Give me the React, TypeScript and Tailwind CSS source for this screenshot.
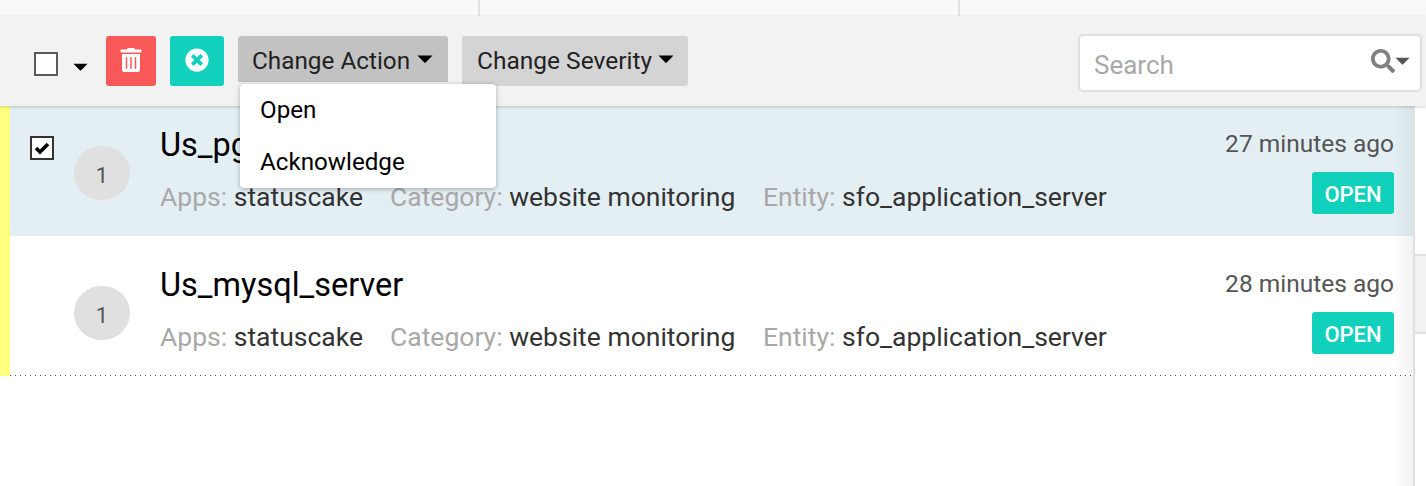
import { FaTrashAlt, FaTimesCircle, FaSearch } from "react-icons/fa";

const Caret = ({ className }: { className: string }) => (
  <svg viewBox="0 0 16 8" className={className} fill="currentColor">
    <path d="M0.5 0.5 H15.5 L8.7 7.5 Q8 8 7.3 7.5 Z" />
  </svg>
);

const rows = [
  { title: "Us_pgsql_server", time: "27 minutes ago", selected: true },
  { title: "Us_mysql_server", time: "28 minutes ago", selected: false },
];

const App = () => {
  return (
    <div className="relative h-[486px] w-[1426px] overflow-hidden bg-white font-['Roboto',sans-serif]">
      {/* top tabs */}
      <div className="flex h-4 bg-[#f9f9f9]">
        <div className="w-[480px] border-r-2 border-[#e2e2e2]" />
        <div className="w-[480px] border-r-2 border-[#e2e2e2]" />
      </div>

      {/* toolbar */}
      <div className="relative z-10 flex h-[90px] items-start bg-[#f2f2f2] pl-[34px] pr-1 pt-5 shadow-[0_1px_3px_rgba(0,0,0,0.2)]">
        <div className="mt-[16px] h-6 w-6 border-2 border-[#5a5a5a] bg-white" />
        <Caret className="ml-[15px] mt-[27px] h-2 w-[15px] text-black" />
        <button className="ml-[18px] flex h-[50px] w-[50px] items-center justify-center rounded-[3px] bg-[#f95858] pb-[2px] text-white">
          <FaTrashAlt size={24} />
        </button>
        <button className="ml-[14px] flex h-[50px] w-[54px] items-center justify-center rounded-[3px] bg-[#11d1bc] pb-[2px] text-white">
          <FaTimesCircle size={24} />
        </button>
        <div className="relative ml-[14px]">
          <button className="flex h-[46px] w-[210px] items-center gap-[7px] rounded-t-[3px] bg-[#c2c2c2] pl-[14px] pt-1 text-[24.3px] leading-none text-[#222]">
            Change Action
            <Caret className="mb-1 h-2 w-4 text-black" />
          </button>
          <div className="absolute left-[2px] top-[48px] w-[256px] rounded-[4px] bg-white pl-5 text-[24.2px] leading-[52px] text-black shadow-[0_1px_5px_rgba(0,0,0,0.3)]">
            <div>Open</div>
            <div>Acknowledge</div>
          </div>
        </div>
        <button className="ml-[14px] flex h-[50px] w-[226px] items-center gap-[6px] rounded-[3px] bg-[#d4d4d4] pl-[15px] text-[24.5px] leading-none text-[#222]">
          Change Severity
          <Caret className="mb-1 h-2 w-4 text-black" />
        </button>
        <div className="ml-auto mt-[-2px] flex h-[58px] w-[344px] items-center rounded-[5px] border-2 border-[#dedede] bg-white pl-[14px] pr-[10px]">
          <span className="flex-1 pt-[4px] text-[26px] leading-none text-[#a8a8a8]">Search</span>
          <FaSearch size={24} className="mb-[4px] text-[#808080]" />
          <Caret className="mb-[4px] h-2 w-[15px] text-[#555]" />
        </div>
      </div>

      <div className="flex h-[390px]">
        {/* list */}
        <div className="relative mt-[-10px] h-[400px] w-[1415px] shrink-0 border-r-2 border-[#e0e0e0]">
          {rows.map((row, i) => (
            <div
              key={row.title}
              className={`flex border-l-[10px] border-[#ffff80] ${i === 1 ? "h-[139px]" : "h-[140px]"} ${row.selected ? "bg-[#e4eff4]" : "bg-white"}`}
            >
              <div className="w-5 shrink-0">
                {row.selected && (
                  <div className="ml-5 mt-[40px] flex h-6 w-6 items-center justify-center border-2 border-[#333] bg-white">
                    <svg viewBox="0 0 16 16" className="h-4 w-4" fill="none" stroke="black" strokeWidth="3.6">
                      <path d="M2 8 L6 12 L14 4" />
                    </svg>
                  </div>
                )}
              </div>
              <div className="ml-[44px] mt-[50px] flex h-[54px] w-14 items-center justify-center rounded-full bg-[#e0e0e0] pt-[5px] text-[22px] text-[#555]">
                1
              </div>
              <div className="ml-[30px] flex-1 pt-[31px]">
                <div className="text-[32.5px] leading-[36px] text-black">{row.title}</div>
                <div className="mt-[19px] flex text-[26.5px] leading-[30px] text-[#333]">
                  <span className="w-[230px]"><span className="text-[#a8a8a8]">Apps:</span> statuscake</span>
                  <span className="w-[373px]"><span className="text-[#a8a8a8]">Category:</span> website monitoring</span>
                  <span><span className="text-[#a8a8a8]">Entity:</span> sfo_application_server</span>
                </div>
              </div>
              <div className="flex flex-col items-end pr-[19px] pt-[33px]">
                <div className="text-[24.5px] leading-[30px] text-[#555]">{row.time}</div>
                <div className="mt-[13px] flex h-[42px] w-[82px] items-center justify-center rounded-[3px] bg-[#11d1bc] pt-[2px] text-[22px] font-medium text-white">
                  OPEN
                </div>
              </div>
            </div>
          ))}
          <div className="h-px border-l-[10px] border-[#ffff80] bg-[repeating-linear-gradient(90deg,#555_0,#555_1px,transparent_1px,transparent_5px)]" />
          <div className="absolute inset-y-0 right-0 w-5 bg-gradient-to-r from-transparent to-black/5" />
        </div>

        {/* next panel peeking in on the right */}
        <div className="mt-[148px] h-[80px] flex-1 border-y-2 border-[#e2e2e2] bg-[#f2f2f2]" />
      </div>
    </div>
  );
};

export default App;
